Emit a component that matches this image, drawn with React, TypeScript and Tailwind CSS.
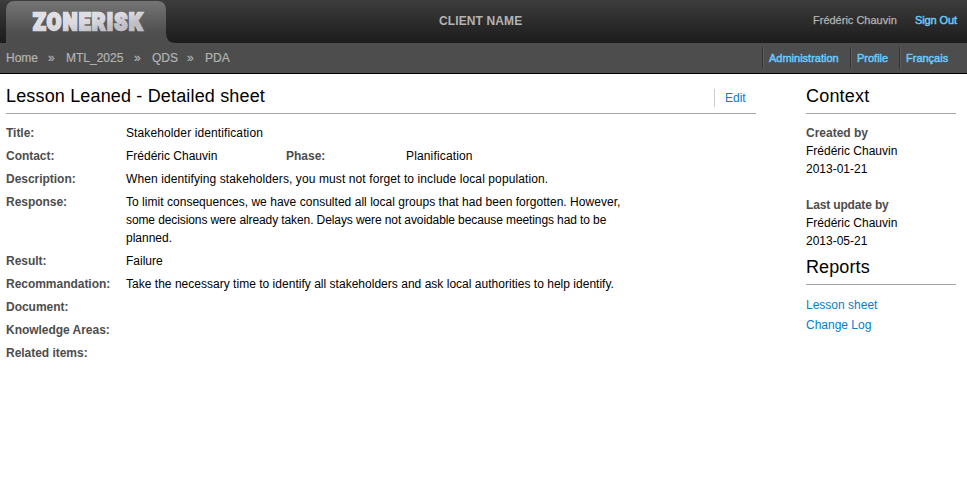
import type { ReactNode } from "react";

function Logo() {
  return (
    <svg width="170" height="43" viewBox="0 0 170 43" className="block">
      <defs>
        <linearGradient id="tab" x1="0" y1="0" x2="0" y2="1">
          <stop offset="0" stopColor="#757575" />
          <stop offset="0.75" stopColor="#4f4f4f" />
          <stop offset="1" stopColor="#4d4d4d" />
        </linearGradient>
        <linearGradient id="letters" gradientUnits="userSpaceOnUse" x1="80" y1="12" x2="84" y2="32">
          <stop offset="0" stopColor="#e0dfe5" />
          <stop offset="0.5" stopColor="#d9d8de" />
          <stop offset="1" stopColor="#c0bfc5" />
        </linearGradient>
      </defs>
      <path d="M0 43V10Q0 1 9 1H151Q160 1 160 10V33Q160 43 170 43Z" fill="url(#tab)" />
      <text
        x="27"
        y="30.2"
        textLength="110.5"
        lengthAdjust="spacingAndGlyphs"
        fontFamily="Roboto, sans-serif"
        fontWeight="900"
        fontSize="24.5"
        letterSpacing="1.5"
        fill="url(#letters)"
        stroke="url(#letters)"
        strokeWidth="2.3"
      >
        ZONERISK
      </text>
    </svg>
  );
}

function Row({ label, children, second }: { label: string; children?: ReactNode; second?: ReactNode }) {
  return (
    <div className="mb-[5px] flex min-h-[18px]">
      <div className="w-[120px] shrink-0 font-bold tracking-[-0.03px] text-[#4d4d4d]">{label}</div>
      <div className={second ? "w-[160px]" : "whitespace-nowrap"}>{children}</div>
      {second}
    </div>
  );
}

export default function App() {
  return (
    <div className="h-[492px] w-[967px] overflow-hidden bg-white font-['Liberation_Sans',Arial,sans-serif] text-[12px] leading-[18px] text-black">
      <header className="flex h-[43px] bg-linear-to-b from-[#3d3d3d] to-[#1c1c1c] pl-[6px]">
        <div className="w-[433px]">
          <Logo />
        </div>
        <div className="w-[374px] pt-[12px] font-bold text-[#b3b3b3]">
          <span className="tracking-[0.12px]">CLIENT NAME</span>
        </div>
        <div className="flex pt-[11px] text-[11px]">
          <span className="w-[102px] text-[#b3b3b3] [-webkit-text-stroke:0.25px_#b3b3b3]">Frédéric Chauvin</span>
          <a className="whitespace-nowrap tracking-[-0.12px] text-[#66ccff] [-webkit-text-stroke:0.45px_#66ccff]">Sign Out</a>
        </div>
      </header>
      <nav className="flex h-[31px] justify-between border-b border-black bg-[#4d4d4d] pl-[6px]">
        <div className="flex pt-[6px] text-[#b3b3b3] [-webkit-text-stroke:0.2px_#b3b3b3]">
          <span className="w-[42px]">Home</span>
          <span className="w-[18px]">»</span>
          <span className="w-[68px]">MTL_2025</span>
          <span className="w-[18px]">»</span>
          <span className="w-[35px]">QDS</span>
          <span className="w-[18px]">»</span>
          <span>PDA</span>
        </div>
        <div className="flex pt-1 text-[11px] leading-[22px] text-[#66ccff] [-webkit-text-stroke:0.45px_#66ccff]">
          <a className="h-[22px] w-[88px] border-l border-[#333333] pl-[6px] shadow-[inset_1px_0_0_#5c5c5c]">Administration</a>
          <a className="h-[22px] w-[49px] border-l border-[#333333] pl-[6px] shadow-[inset_1px_0_0_#5c5c5c]">Profile</a>
          <a className="h-[22px] w-[68px] border-l border-[#333333] pl-[6px] shadow-[inset_1px_0_0_#5c5c5c]">Français</a>
        </div>
      </nav>
      <div className="flex gap-[50px] pl-[6px] pt-[6px]">
        <main className="w-[750px]">
          <div className="flex h-[34px] justify-between border-b border-[#a6a6a6]">
            <h1 className="pt-[4px] text-[18px] leading-6 tracking-[0.16px]">Lesson Leaned - Detailed sheet</h1>
            <a className="mt-[9px] h-[18px] w-[42px] border-l border-[#cccccc] pl-[10px] text-[#0080cc]">Edit</a>
          </div>
          <div className="pt-[10px]">
            <Row label="Title:">
              <span className="tracking-[0.11px]">Stakeholder identification</span>
            </Row>
            <Row
              label="Contact:"
              second={
                <>
                  <div className="w-[120px] font-bold text-[#4d4d4d]">Phase:</div>
                  <div className="tracking-[0.15px]">Planification</div>
                </>
              }
            >
              Frédéric Chauvin
            </Row>
            <Row label="Description:">
              <span className="tracking-[0.1px]">
                When identifying stakeholders, you must not forget to include local population.
              </span>
            </Row>
            <Row label="Response:">
              <span className="tracking-[0.03px]">
                To limit consequences, we have consulted all local groups that had been forgotten. However,
              </span>
              <br />
              <span className="tracking-[-0.1px]">
                some decisions were already taken. Delays were not avoidable because meetings had to be
              </span>
              <br />
              planned.
            </Row>
            <Row label="Result:">Failure</Row>
            <Row label="Recommandation:">
              <span className="tracking-[0.02px]">
                Take the necessary time to identify all stakeholders and ask local authorities to help identify.
              </span>
            </Row>
            <Row label="Document:" />
            <Row label="Knowledge Areas:" />
            <Row label="Related items:" />
          </div>
        </main>
        <aside className="w-[150px]">
          <h2 className="h-[34px] border-b border-[#a6a6a6] pt-[4px] text-[18px] leading-6 tracking-[0.2px]">Context</h2>
          <div className="pt-[10px]">
            <div className="font-bold text-[#4d4d4d]">Created by</div>
            <div>Frédéric Chauvin</div>
            <div>2013-01-21</div>
            <div className="pt-[18px] font-bold tracking-[-0.15px] text-[#4d4d4d]">Last update by</div>
            <div>Frédéric Chauvin</div>
            <div>2013-05-21</div>
          </div>
          <h2 className="h-[35px] border-b border-[#a6a6a6] pt-[5px] text-[18px] leading-6 tracking-[0.1px]">Reports</h2>
          <div className="flex flex-col pt-[10px] leading-5 text-[#0080cc]">
            <a>Lesson sheet</a>
            <a>Change Log</a>
          </div>
        </aside>
      </div>
    </div>
  );
}
